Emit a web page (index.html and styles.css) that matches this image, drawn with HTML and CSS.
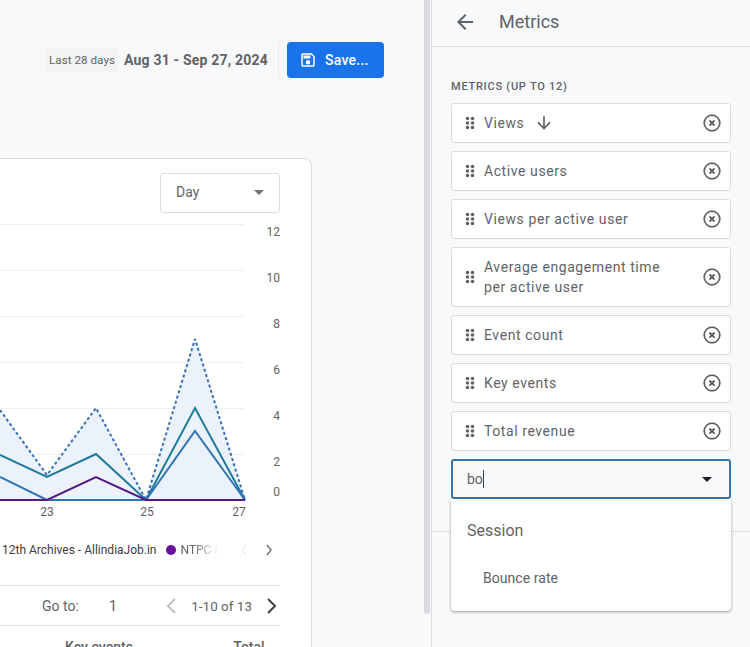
FILE: index.html
```html
<!DOCTYPE html>
<html lang="en">
<head>
<meta charset="utf-8">
<title>Metrics</title>
<link rel="stylesheet" href="styles.css">
</head>
<body>
<main class="main">
  <div class="toolbar">
    <span class="range-chip">Last 28 days</span>
    <span class="range">Aug 31 - Sep 27, 2024</span>
    <span class="toolbar-sep"></span>
    <button class="save">
      <svg class="save-icon" viewBox="0 0 24 24" width="18" height="18"><path fill="#fff" d="M17 3H5a2 2 0 0 0-2 2v14a2 2 0 0 0 2 2h14a2 2 0 0 0 2-2V7zm2 16H5V5h11.2L19 7.8zM12 12a3 3 0 1 0 0 6 3 3 0 0 0 0-6zM6 6h9v4H6z"/></svg>
      Save...
    </button>
  </div>
  <section class="card">
    <div class="card-top">
      <div class="select"><span>Day</span><i class="select-caret"></i></div>
    </div>
    <svg class="chart" viewBox="0 0 312 300" width="312" height="300">
      <g class="grid">
        <path d="M0 4.500H244M0 50.500H244M0 96.500H244M0 142.500H244M0 188.500H244M0 234.500H244M0 280.500H244"/>
      </g>
      <path class="area" d="M0 190L47 255 96 188 146 280 195 119 245 280V280H0Z"/>
      <path class="dotted" d="M0 190L47 255 96 188 146 280 195 119 245 280"/>
      <path class="teal" d="M0 235L47 257 96 234 146 280 195 188 245 280"/>
      <path class="blue" d="M0 257L47 280 96 280 146 280 195 211 245 280"/>
      <path class="purple" d="M0 280H47L96 257 146 280H245"/>
      <g class="axis-y">
        <text x="280" y="16">12</text>
        <text x="280" y="62">10</text>
        <text x="280" y="108">8</text>
        <text x="280" y="154">6</text>
        <text x="280" y="200">4</text>
        <text x="280" y="246">2</text>
        <text x="280" y="276">0</text>
      </g>
      <g class="axis-x">
        <text x="47" y="296">23</text>
        <text x="147" y="296">25</text>
        <text x="239" y="296">27</text>
      </g>
    </svg>
    <div class="legend">
      <span class="legend-text">12th Archives - AllindiaJob.in</span>
      <i class="legend-dot"></i>
      <span class="legend-fade">NTPC I</span>
      <svg class="legend-arrow" viewBox="0 0 10 14" width="10" height="14"><path class="chev-faint" d="M7 2L3 7l4 5"/></svg>
      <svg class="legend-arrow" viewBox="0 0 10 14" width="10" height="14"><path class="chev-mid" d="M3 2l4 5-4 5"/></svg>
    </div>
    <div class="pager">
      <span class="goto">Go to:</span>
      <span class="page-num">1</span>
      <svg viewBox="0 0 10 16" width="10" height="16"><path class="chev-light" d="M9 1L2 8l7 7"/></svg>
      <span class="page-range">1-10 of 13</span>
      <svg viewBox="0 0 10 16" width="10" height="16"><path class="chev-dark" d="M1 1l7 7-7 7"/></svg>
    </div>
    <div class="table-head">
      <span class="col-key">Key events</span>
      <span class="col-total">Total</span>
    </div>
  </section>
</main>
<div class="scroll-track"><div class="scroll-thumb"></div></div>
<aside class="panel">
  <header class="panel-head">
    <svg viewBox="0 0 24 24" width="24" height="24"><path fill="#5f6368" d="M20 11H7.800l5.600-5.600L12 4l-8 8 8 8 1.400-1.400L7.800 13H20z"/></svg>
    <h1>Metrics</h1>
  </header>
  <div class="panel-body">
    <div class="field-label">METRICS (UP TO 12)</div>
    <ul class="metric-list">
      <li class="metric"><svg class="grip" viewBox="0 0 10 14" width="10" height="14"><use href="#grip"/></svg><span class="metric-name">Views</span><svg class="sort" viewBox="0 0 24 24" width="20" height="20"><path d="M20 12l-1.400-1.400-5.600 5.600V4h-2v12.200l-5.600-5.600L4 12l8 8z"/></svg><svg class="remove" viewBox="0 0 20 20" width="20" height="20"><use href="#rm"/></svg></li>
      <li class="metric"><svg class="grip" viewBox="0 0 10 14" width="10" height="14"><use href="#grip"/></svg><span class="metric-name">Active users</span><svg class="remove" viewBox="0 0 20 20" width="20" height="20"><use href="#rm"/></svg></li>
      <li class="metric"><svg class="grip" viewBox="0 0 10 14" width="10" height="14"><use href="#grip"/></svg><span class="metric-name">Views per active user</span><svg class="remove" viewBox="0 0 20 20" width="20" height="20"><use href="#rm"/></svg></li>
      <li class="metric metric-tall"><svg class="grip" viewBox="0 0 10 14" width="10" height="14"><use href="#grip"/></svg><span class="metric-name">Average engagement time<br>per active user</span><svg class="remove" viewBox="0 0 20 20" width="20" height="20"><use href="#rm"/></svg></li>
      <li class="metric"><svg class="grip" viewBox="0 0 10 14" width="10" height="14"><use href="#grip"/></svg><span class="metric-name">Event count</span><svg class="remove" viewBox="0 0 20 20" width="20" height="20"><use href="#rm"/></svg></li>
      <li class="metric"><svg class="grip" viewBox="0 0 10 14" width="10" height="14"><use href="#grip"/></svg><span class="metric-name">Key events</span><svg class="remove" viewBox="0 0 20 20" width="20" height="20"><use href="#rm"/></svg></li>
      <li class="metric"><svg class="grip" viewBox="0 0 10 14" width="10" height="14"><use href="#grip"/></svg><span class="metric-name">Total revenue</span><svg class="remove" viewBox="0 0 20 20" width="20" height="20"><use href="#rm"/></svg></li>
    </ul>
    <div class="combo">
      <div class="combo-input"><span class="combo-text">bo</span><i class="combo-caret"></i></div>
      <div class="dropdown">
        <div class="group-name">Session</div>
        <div class="option">Bounce rate</div>
      </div>
    </div>
    <div class="panel-rule"></div>
  </div>
</aside>
<svg class="defs" width="0" height="0">
  <defs>
    <g id="grip"><circle cx="2.500" cy="2.500" r="1.800"/><circle cx="7.500" cy="2.500" r="1.800"/><circle cx="2.500" cy="7" r="1.800"/><circle cx="7.500" cy="7" r="1.800"/><circle cx="2.500" cy="11.500" r="1.800"/><circle cx="7.500" cy="11.500" r="1.800"/></g>
    <g id="rm"><circle cx="10" cy="10" r="7.800" fill="none" stroke="#5f6368" stroke-width="1.700"/><path d="M7.500 7.500l5 5M12.500 7.500l-5 5" stroke="#5f6368" stroke-width="2" fill="none"/></g>
  </defs>
</svg>
</body>
</html>
```
FILE: styles.css
```css
* { box-sizing: border-box; }
html, body { margin: 0; height: 100%; }
body {
  display: flex;
  width: 750px;
  height: 647px;
  overflow: hidden;
  background: #f8f9fa;
  font-family: Roboto, "Liberation Sans", sans-serif;
  color: #3c4043;
}
.main { width: 424px; flex: none; overflow: hidden; }
.toolbar {
  display: flex;
  align-items: center;
  justify-content: flex-end;
  height: 158px;
  padding: 42px 40px 80px 0;
}
.range-chip {
  background: #f3f4f4;
  font-size: 11.700px;
  color: #5f6368;
  padding: 0 4px;
  height: 24px;
  line-height: 24px;
  margin-right: 5px;
}
.range { font-size: 14px; font-weight: 700; color: #5f6368; letter-spacing: .2px; }
.toolbar-sep { width: 1px; height: 38px; background: #e8eaed; margin: 0 8px 0 10px; }
.save {
  display: flex;
  align-items: center;
  gap: 8px;
  width: 97px;
  height: 36px;
  border: 0;
  border-radius: 4px;
  background: #1a73e8;
  color: #fff;
  font: 500 14px Roboto, sans-serif;
  letter-spacing: .25px;
  padding: 0 0 0 12px;
}
.card {
  width: 312px;
  height: 520px;
  background: #fff;
  border: 1px solid #dadce0;
  border-left: 0;
  border-radius: 0 8px 0 0;
}
.card-top { display: flex; justify-content: flex-end; height: 61px; padding: 14px 31px 0 0; }
.select {
  display: flex;
  align-items: center;
  justify-content: space-between;
  width: 120px;
  height: 40px;
  padding: 0 15px 2px 15px;
  border: 1px solid #dadce0;
  border-radius: 3px;
  font-size: 14px;
  color: #5f6368;
}
.select-caret { border: 5px solid transparent; border-top-color: #757575; border-bottom: 0; }
.chart { display: block; }
.grid path { stroke: #eceef0; fill: none; }
.area { fill: #ecf2fb; }
.dotted { fill: none; stroke: #3a6fb5; stroke-width: 2; stroke-dasharray: 3 2.500; stroke-linejoin: bevel; }
.teal { fill: none; stroke: #1b7a9c; stroke-width: 2; }
.blue { fill: none; stroke: #2f74b5; stroke-width: 2; }
.purple { fill: none; stroke: #551a85; stroke-width: 2; }
.axis-y text { font-size: 12px; fill: #5f6368; text-anchor: end; }
.axis-x text { font-size: 12px; fill: #5f6368; text-anchor: middle; }
.legend {
  display: flex;
  align-items: center;
  height: 65px;
  padding: 0 0 6px 2px;
  font-size: 12px;
  color: #3c4043;
  white-space: nowrap;
}
.legend-dot { width: 10px; height: 10px; border-radius: 50%; background: #6a0f9c; margin: 0 5px 0 9px; flex: none; }
.legend-fade {
  color: #5f6368;
  width: 39px;
  overflow: hidden;
  margin-right: 19px;
  -webkit-mask-image: linear-gradient(90deg, #000 30%, transparent 100%);
  mask-image: linear-gradient(90deg, #000 30%, transparent 100%);
}
.legend-arrow { flex: none; margin-right: 15px; }
.legend-arrow path, .pager path { fill: none; stroke-linecap: butt; }
.chev-faint { stroke: #e8eaed; stroke-width: 1.500; }
.chev-mid { stroke: #757575; stroke-width: 1.500; }
.chev-light { stroke: #bdc1c6; stroke-width: 2; }
.chev-dark { stroke: #3c4043; stroke-width: 2; }
.pager {
  display: flex;
  align-items: center;
  width: 280px;
  height: 41px;
  border-top: 1px solid #e0e0e0;
  border-bottom: 1px solid #e0e0e0;
  font-size: 14px;
  color: #5f6368;
}
.goto { margin-left: 42px; }
.page-num { margin: 0 49px 0 30px; color: #5f6368; font-size: 15px; }
.page-range { margin: 0 15px 0 15px; font-size: 13.500px; }
.table-head { width: 280px; font-size: 14px; font-weight: 500; color: #5f6368; padding-top: 13px; white-space: nowrap; }
.col-key { margin-left: 65px; }
.col-total { margin-left: 97px; }
.scroll-track { width: 7px; flex: none; }
.scroll-thumb { width: 6px; height: 614px; background: #dadce0; border-radius: 0 0 3px 3px; }
.panel { flex: 1; border-left: 1px solid #dadce0; }
.panel-head {
  display: flex;
  align-items: center;
  gap: 22px;
  height: 47px;
  padding: 0 0 3px 21px;
  border-bottom: 1px solid #dadce0;
}
.panel-head h1 { margin: 0; font-size: 18px; font-weight: 400; color: #5f6368; }
.panel-body { position: relative; padding: 33px 19px 0 19px; }
.field-label { font-size: 11px; font-weight: 500; letter-spacing: .76px; color: #5f6368; height: 23px; line-height: 13px; }
.metric-list { list-style: none; margin: 0; padding: 0; display: flex; flex-direction: column; gap: 8px; }
.metric {
  display: flex;
  align-items: center;
  height: 40px;
  padding: 0 8px 0 13px;
  background: #fff;
  border: 1px solid #dadce0;
  border-radius: 3px;
  font-size: 14px;
  letter-spacing: .58px;
  color: #5f6368;
}
.metric-tall { height: 60px; line-height: 20px; }
.grip { fill: #5f6368; margin-right: 9px; flex: none; }
.sort { fill: #5f6368; margin-left: 10px; }
.remove { margin-left: auto; flex: none; }
.combo { position: relative; z-index: 1; margin-top: 8px; }
.combo-input {
  display: flex;
  align-items: center;
  justify-content: space-between;
  height: 40px;
  padding: 0 17px 0 14px;
  border: 2px solid #3a75a8;
  border-radius: 3px;
  font-size: 14px;
  color: #5f6368;
}
.combo-text { border-right: 1px solid #3c4043; line-height: 18px; }
.combo-caret { border: 5px solid transparent; border-top-color: #202124; border-bottom: 0; }
.dropdown {
  position: absolute;
  left: 0;
  right: 0;
  top: 40px;
  height: 112px;
  background: #fff;
  border-radius: 0 0 4px 4px;
  box-shadow: 0 1px 3px rgba(60,64,67,.5);
}
.group-name { font-size: 16px; color: #5f6368; padding: 22px 0 0 16px; line-height: 20px; }
.option { font-size: 14px; color: #5f6368; padding: 28px 0 0 32px; line-height: 18px; letter-spacing: .05px; }
.panel-rule { position: absolute; left: 0; right: 0; top: 484px; border-top: 1px solid #dadce0; }
.defs { position: absolute; }
```
